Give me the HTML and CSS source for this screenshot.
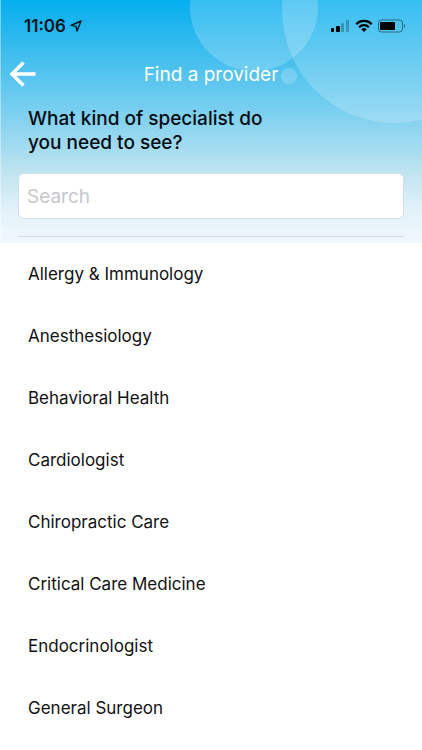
FILE: index.html
```html
<!DOCTYPE html>
<html lang="en">
<head>
    <meta charset="UTF-8">
    <meta name="viewport" content="width=device-width, initial-scale=1.0">
    <title>Find a provider</title>
    <link rel="stylesheet" href="styles.css">
</head>
<body>
    <header class="header">
        <svg class="bubbles" width="232" height="124" viewBox="190 0 232 124" aria-hidden="true">
            <circle cx="254" cy="7" r="64"/>
            <circle cx="395" cy="10" r="113"/>
            <circle cx="289" cy="76" r="8"/>
        </svg>
        <div class="status-bar">
            <div class="status-left">
                <span class="time">11:06</span>
                <svg width="12" height="12" viewBox="0 0 12 12" aria-hidden="true">
                    <path d="M11 1 L1 5.4 L5.8 6.2 L7 11 Z" fill="none" stroke="#04131c" stroke-width="1.4" stroke-linejoin="round"/>
                </svg>
            </div>
            <div class="status-right">
                <svg width="20" height="14" viewBox="0 0 20 14" aria-hidden="true">
                    <rect x="1" y="9" width="3" height="4" rx="1"/>
                    <rect x="6" y="7" width="4" height="6" rx="1"/>
                    <rect x="11" y="4" width="3" height="9" rx="1" opacity="0.25"/>
                    <rect x="16" y="1" width="3" height="12" rx="1" opacity="0.25"/>
                </svg>
                <svg width="18" height="14" viewBox="0 0 18 14" aria-hidden="true">
                    <g fill="none" stroke="#000" stroke-width="2.2">
                        <path d="M1.3 5.1 A11 11 0 0 1 16.7 5.1"/>
                        <path d="M4 8.2 A7.1 7.1 0 0 1 14 8.2"/>
                    </g>
                    <path d="M6.3 10.3 A3.9 3.9 0 0 1 11.7 10.3 L9 13 Z"/>
                </svg>
                <svg width="28" height="14" viewBox="0 0 28 14" aria-hidden="true">
                    <rect x="0.5" y="1" width="24" height="12" rx="3" fill="none" stroke="#000" stroke-opacity="0.45"/>
                    <rect x="2" y="3" width="15" height="8" rx="1"/>
                    <path d="M26 5 a2.3 2.3 0 0 1 0 4 Z" opacity="0.45"/>
                </svg>
            </div>
        </div>
        <nav class="nav-bar">
            <button type="button" class="back-button" aria-label="Back">
                <svg width="26" height="26" viewBox="0 0 26 26" aria-hidden="true">
                    <path d="M13.5 1.5 L2 13 L13.5 24.5 M2 13 H25.5" fill="none" stroke="#fff" stroke-width="3.4"/>
                </svg>
            </button>
            <span class="nav-title">Find a provider</span>
        </nav>
        <h1 class="question"><label for="search">What kind of specialist do you need to see?</label></h1>
        <div class="search-box">
            <input type="text" id="search" class="search-input" placeholder="Search">
        </div>
    </header>
    <main>
        <ul class="specialties">
            <li><a href="#">Allergy &amp; Immunology</a></li>
            <li><a href="#">Anesthesiology</a></li>
            <li><a href="#">Behavioral Health</a></li>
            <li><a href="#">Cardiologist</a></li>
            <li><a href="#">Chiropractic Care</a></li>
            <li><a href="#">Critical Care Medicine</a></li>
            <li><a href="#">Endocrinologist</a></li>
            <li><a href="#">General Surgeon</a></li>
        </ul>
    </main>
</body>
</html>
```

FILE: styles.css
```css
* {
    box-sizing: border-box;
}
body {
    margin: 0;
    background-color: #fff;
    color: #111;
    font-family: Inter, "Liberation Sans", sans-serif;
    font-size: 17px;
}
.header {
    position: relative;
    padding-bottom: 6px;
    background: linear-gradient(#04aeef 0, #45bfee 60px, #84d2f0 120px, #bfe4ef 172px, #e2f1f9 210px, #f1f8fc 100%);
    box-shadow: inset 1px 0 rgba(255, 255, 255, 0.4);
}
/* Decorative circles behind the header content */
.bubbles {
    position: absolute;
    top: 0;
    right: 0;
    fill: #fff;
    fill-opacity: 0.2;
}
.status-bar {
    position: relative;
    display: flex;
    justify-content: space-between;
    align-items: center;
    height: 52px;
    padding: 0 16px 0 24px;
}
.status-left {
    display: flex;
    align-items: center;
    gap: 4px;
}
.time {
    font-weight: 600;
    color: #04131c;
}
.status-right {
    display: flex;
    align-items: center;
    gap: 5px;
}
.nav-bar {
    position: relative;
    display: grid;
    grid-template-columns: 44px 1fr 44px;
    align-items: center;
    height: 44px;
}
.back-button {
    display: flex;
    padding: 0 0 0 10px;
    background: none;
    border: none;
    cursor: pointer;
}
.nav-title {
    text-align: center;
    font-size: 19px;
    color: #fff;
}
.question {
    position: relative;
    max-width: 300px;
    margin: 0;
    padding: 11px 0 0 28px;
    font-size: 19px;
    font-weight: 500;
    line-height: 24px;
    color: #030b10;
}
.search-box {
    margin: 0 18px;
    padding: 18px 0 17px;
    border-bottom: 1px solid #cfdce4;
}
.search-input {
    display: block;
    width: 100%;
    height: 46px;
    padding: 0 8px;
    background-color: #fff;
    border: 1px solid #d3e0e6;
    border-radius: 6px;
    font-family: inherit;
    font-size: 19px;
}
.search-input::placeholder {
    color: #c7c7cc;
}
.specialties {
    margin: 0;
    padding: 0;
    list-style: none;
}
.specialties a {
    display: flex;
    align-items: center;
    height: 62px;
    padding: 0 28px;
    color: inherit;
    text-decoration: none;
}
```
